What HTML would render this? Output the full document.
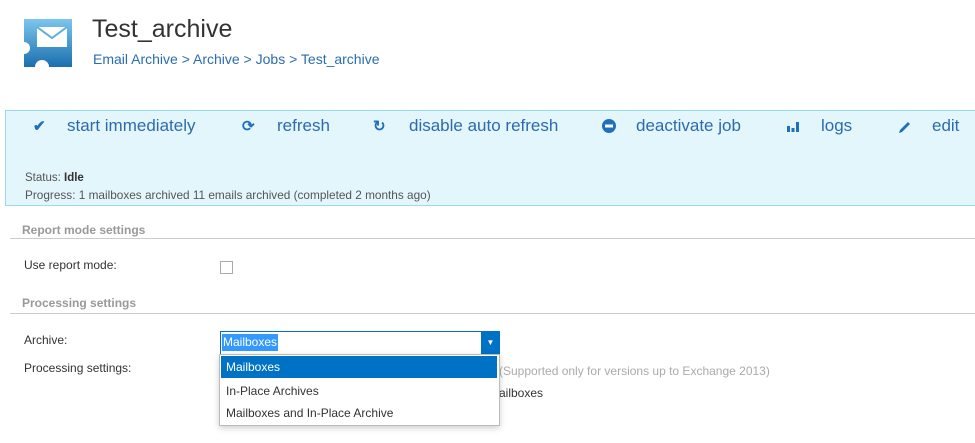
<!DOCTYPE html>
<html><head><meta charset="utf-8"><style>
body{margin:0;width:975px;height:443px;overflow:hidden;background:#fff;font-family:"Liberation Sans",sans-serif;position:relative}
.a{position:absolute;white-space:nowrap}
.tb{color:#2c6bb0;font-size:17px;top:116px}
.ic{color:#1f6fbf;font-size:15px;top:117px;font-weight:bold}
.lbl{font-size:12px;color:#333}
.hd{font-size:12px;color:#999;font-weight:bold}
.it{position:absolute;left:221px;width:276px;height:22px;font-size:12px;line-height:22px;padding-left:5px;box-sizing:border-box;color:#333}
</style></head><body>
<svg class="a" style="left:24px;top:19px" width="48" height="48" viewBox="0 0 48 48">
<defs><linearGradient id="g" x1="0" y1="0" x2="0" y2="1"><stop offset="0" stop-color="#7cc6ee"/><stop offset="1" stop-color="#1b6fae"/></linearGradient></defs>
<path d="M0 0H48V48H25A7 7 0 0 0 11 48H0V35A6 6 0 0 0 0 23Z" fill="url(#g)"/>
<path d="M13 8H43V28H13Z" fill="#fff"/><path d="M13 8L28 19L43 8" fill="none" stroke="#5aaee0" stroke-width="2"/>
</svg>
<div class="a" style="left:92px;top:15px;font-size:25px;color:#333">Test_archive</div>
<div class="a" style="left:93px;top:51px;font-size:14px;color:#2a6db0">Email Archive &gt; Archive &gt; Jobs &gt; Test_archive</div>
<div class="a" style="left:5px;top:110px;width:975px;height:96px;background:#e3f6fc;border:1px solid #9cd8f0;box-sizing:border-box"></div>
<div class="a ic" style="left:33px">✔</div><div class="a tb" style="left:67px">start immediately</div>
<div class="a ic" style="left:242px">⟳</div><div class="a tb" style="left:277px">refresh</div>
<div class="a ic" style="left:373px">↻</div><div class="a tb" style="left:409px">disable auto refresh</div>
<svg class="a" style="left:602px;top:119px" width="14" height="14"><circle cx="7" cy="7" r="7" fill="#1f6fbf"/><rect x="3" y="5.5" width="8" height="3" fill="#fff"/></svg>
<div class="a tb" style="left:636px">deactivate job</div>
<svg class="a" style="left:787px;top:121px" width="13" height="11"><rect x="0" y="5" width="3" height="6" fill="#1f6fbf"/><rect x="4.5" y="7" width="3" height="4" fill="#1f6fbf"/><rect x="9" y="1" width="3" height="10" fill="#1f6fbf"/></svg>
<div class="a tb" style="left:821px">logs</div>
<svg class="a" style="left:898px;top:120px" width="14" height="14"><path d="M1 13L2 10L10 2L12 4L4 12Z" fill="#1f6fbf"/></svg>
<div class="a tb" style="left:932px">edit</div>
<div class="a" style="left:25px;top:172px;font-size:11.5px;color:#555">Status: <b style="color:#333">Idle</b></div>
<div class="a" style="left:25px;top:188px;font-size:11.8px;color:#555">Progress: 1 mailboxes archived 11 emails archived (completed 2 months ago)</div>
<div class="a hd" style="left:22px;top:223px">Report mode settings</div>
<div class="a" style="left:10px;top:238px;width:965px;height:1px;background:#ccc"></div>
<div class="a lbl" style="left:24px;top:258px">Use report mode:</div>
<div class="a" style="left:220px;top:261px;width:13px;height:13px;border:1px solid #aaa;box-sizing:border-box"></div>
<div class="a hd" style="left:22px;top:296px">Processing settings</div>
<div class="a" style="left:10px;top:313px;width:965px;height:1px;background:#ccc"></div>
<div class="a lbl" style="left:24px;top:333px">Archive:</div>
<div class="a lbl" style="left:24px;top:361px">Processing settings:</div>
<div class="a" style="left:499px;top:364px;font-size:12px;color:#aaa">(Supported only for versions up to Exchange 2013)</div>
<div class="a" style="left:499px;top:386px;font-size:12px;color:#333">ailboxes</div>
<div class="a" style="left:220px;top:331px;width:280px;height:24px;border:1px solid #0072c6;box-sizing:border-box;background:#fff"></div>
<div class="a" style="left:222px;top:334px;height:17px;line-height:17px;font-size:12px;background:#3399ff;color:#fff;padding:0 1px">Mailboxes</div>
<div class="a" style="left:481px;top:331px;width:19px;height:24px;background:#0072c6;color:#fff;font-size:8px;text-align:center;line-height:24px">▼</div>
<div class="a" style="left:219px;top:354px;width:281px;height:72px;background:#fff;border:1px solid #bbb;box-sizing:border-box;box-shadow:0 2px 6px rgba(0,0,0,.2)"></div>
<div class="it" style="top:356px;background:#0072c6;color:#fff">Mailboxes</div>
<div class="it" style="top:380px">In-Place Archives</div>
<div class="it" style="top:402px">Mailboxes and In-Place Archive</div>
</body></html>
